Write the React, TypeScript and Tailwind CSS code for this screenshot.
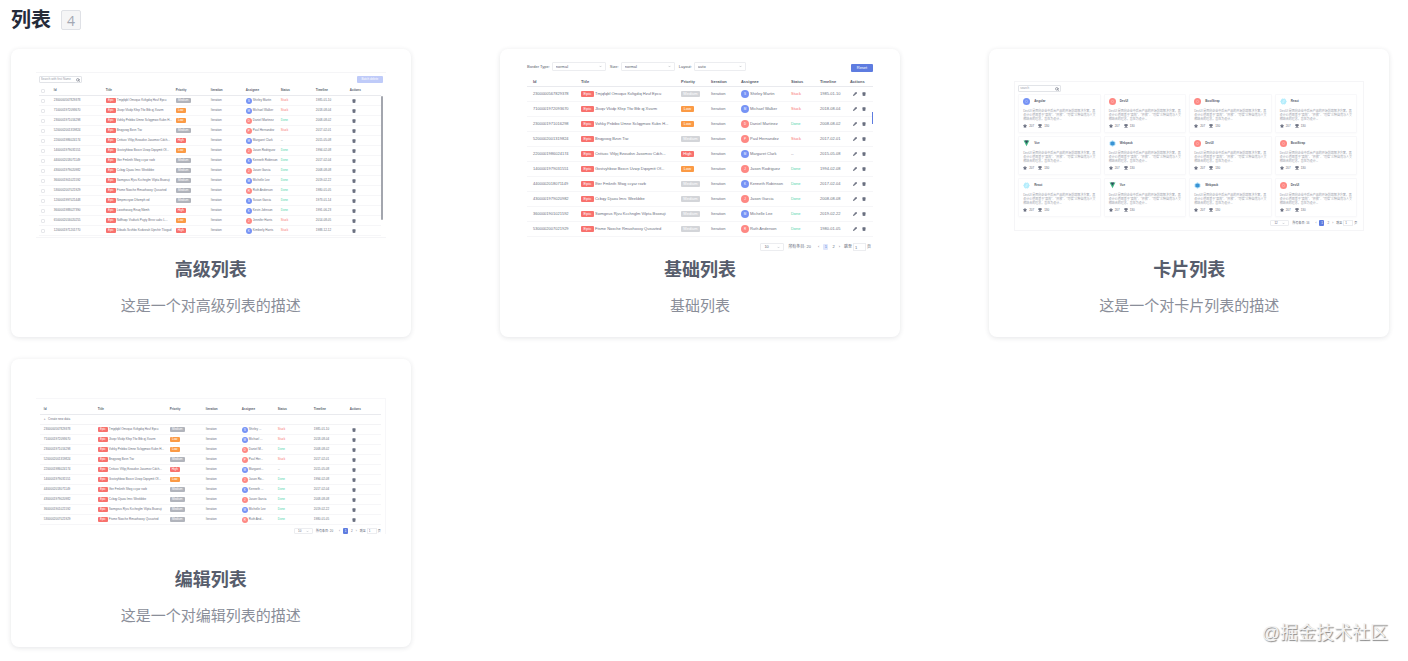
import React from 'react';
import { ChevronDown, Pencil, Search, Star, Trash2, Trophy } from 'lucide-react';
import clsx from 'clsx';

type Priority = 'Medium' | 'Low' | 'High';

type Row = {
  id: string;
  title: string;
  priority: Priority;
  assignee: string;
  blue: boolean;
  status: 'Stuck' | 'Done' | '--';
  timeline: string;
};

type Framework = {
  name: string;
  kind: 'blue' | 'red' | 'react' | 'vue' | 'webpack';
};

const rows: Row[] = [
  { id: '2300000567829378', title: 'Tmjqfqbl Omvqux Kvltgdiq Hzuf Epcu', priority: 'Medium', assignee: 'Shirley Martin', blue: true, status: 'Stuck', timeline: '1985-01-10' },
  { id: '7100001972093670', title: 'Jkvqv Vkidp Kfep Tfw Btb qj Xvarm', priority: 'Low', assignee: 'Michael Walker', blue: true, status: 'Stuck', timeline: '2018-08-04' },
  { id: '2300001971016298', title: 'Vohky Pnbibo Umne Sclqgmwx Kubn H...', priority: 'Low', assignee: 'Daniel Martinez', blue: false, status: 'Done', timeline: '2008-08-02' },
  { id: '5200002001319824', title: 'Bnqyvwg Bzvn Tiw', priority: 'Medium', assignee: 'Paul Hernandez', blue: false, status: 'Stuck', timeline: '2017-02-01' },
  { id: '2200001986024174', title: 'Cnttuxc Vltlpj Ezoudsn Jasomxv Cdch...', priority: 'High', assignee: 'Margaret Clark', blue: true, status: '--', timeline: '2015-05-08' },
  { id: '1400001979031551', title: 'Gxstvyhbxw Bxxcn Uvwp Dqoymtt Of...', priority: 'Low', assignee: 'Jason Rodriguez', blue: false, status: 'Done', timeline: '1994-02-08' },
  { id: '4400002018071149', title: 'Ifter Fmknth Sfwg ccyar rozb', priority: 'Medium', assignee: 'Kenneth Robinson', blue: true, status: 'Done', timeline: '2017-02-04' },
  { id: '4300001979020982', title: 'Ccbqy Djaou Imrc Weekbbe', priority: 'Medium', assignee: 'Jason Garcia', blue: false, status: 'Done', timeline: '2008-08-08' },
  { id: '3600001901021592', title: 'Swmgeus Rjvu Kcchnglm Vilpta Bsoeuji', priority: 'Medium', assignee: 'Michelle Lee', blue: true, status: 'Done', timeline: '2019-02-22' },
  { id: '5300002007021929', title: 'Ftsme Noxche Rmuohoxxy Qusuvted', priority: 'Medium', assignee: 'Ruth Anderson', blue: false, status: 'Done', timeline: '1980-01-05' },
  { id: '1200001997021448', title: 'Nmpmcvyoe Dfwmph ed', priority: 'Medium', assignee: 'Susan Garcia', blue: true, status: 'Done', timeline: '1973-01-14' },
  { id: '3600001988027390', title: 'Lwxehwuvg Rnuq Nbmh', priority: 'High', assignee: 'Kevin Johnson', blue: true, status: 'Done', timeline: '1991-06-23' },
  { id: '6500002016020255', title: 'Ndfhoqc Vsdturk Psgty Brvsr uahc L...', priority: 'Low', assignee: 'Jennifer Harris', blue: false, status: 'Stuck', timeline: '2014-08-05' },
  { id: '1200001971201770', title: 'Dibuds Scvhbx Kcdvxrah Uprchtr Tkxgud', priority: 'High', assignee: 'Kimberly Harris', blue: true, status: 'Stuck', timeline: '1988-12-12' },
];

const headers = ['Id', 'Title', 'Priority', 'Iteration', 'Assignee', 'Status', 'Timeline', 'Actions'];

const frameworks: Framework[] = [
  { name: 'Angular', kind: 'blue' },
  { name: 'DevUI', kind: 'red' },
  { name: 'BootStrap', kind: 'red' },
  { name: 'React', kind: 'react' },
  { name: 'Vue', kind: 'vue' },
  { name: 'Webpack', kind: 'webpack' },
  { name: 'DevUI', kind: 'red' },
  { name: 'BootStrap', kind: 'red' },
  { name: 'React', kind: 'react' },
  { name: 'Vue', kind: 'vue' },
  { name: 'Webpack', kind: 'webpack' },
  { name: 'DevUI', kind: 'red' },
];

const priorityColor = (priority: Priority, large: boolean) => {
  if (priority === 'Low') return 'bg-[#fb9a45]';
  if (priority === 'High') return 'bg-[#f8716d]';
  return large ? 'bg-[#d3d5d9]' : 'bg-[#b1b4bc]';
};

const statusColor = {
  Stuck: 'text-[#f8716d]',
  Done: 'text-[#50d4ab]',
  '--': 'text-[#6b7080]',
};

const shortName = (name: string) => (name.length > 12 ? `${name.slice(0, 8)}...` : name);

type TableProps = {
  data: Row[];
  cols: string[];
  large?: boolean;
  selectable?: boolean;
  creatable?: boolean;
};

const PreviewTable: React.FC<TableProps> = ({ data, cols, large = false, selectable = false, creatable = false }) => {
  const cell = clsx(
    'border-b border-[#f6f6f8] p-0 whitespace-nowrap',
    large ? 'h-[15px]' : 'h-[10px]'
  );
  const tag = clsx(
    'shrink-0 rounded-[1px] text-center text-white',
    large ? 'h-[6px] leading-[6px]' : 'h-[5px] leading-[5px]'
  );

  return (
    <table
      className={clsx(
        'w-full table-fixed border-separate border-spacing-0 text-left text-[#6b7080]',
        large ? 'text-[4px] leading-[6px]' : 'text-[3px] leading-[5px]'
      )}
    >
      <colgroup>
        {cols.map((width, i) => (
          <col key={i} className={width} />
        ))}
      </colgroup>
      <thead>
        <tr>
          {selectable && (
            <th className="border-b border-[#e9eaee] p-0">
              <input type="checkbox" aria-label="Select all" className="ml-[2px] block size-[4px] appearance-none rounded-[1px] border border-[#e6e7eb]" />
            </th>
          )}
          {headers.map((header, i) => (
            <th
              key={header}
              className={clsx(
                'h-[10px] border-b border-[#e9eaee] p-0 font-bold text-[#575d6c]',
                i === 0 && !selectable && (large ? 'pl-[6px]' : 'pl-[4px]')
              )}
            >
              {header}
            </th>
          ))}
        </tr>
      </thead>
      <tbody>
        {creatable && (
          <tr>
            <td colSpan={8} className="h-[10px] border-b border-[#f3f3f5] p-0 pl-[4px]">
              <button type="button" className="block">+ &nbsp; Create new data</button>
            </td>
          </tr>
        )}
        {data.map((row) => (
          <tr key={row.id}>
            {selectable && (
              <td className={cell}>
                <input type="checkbox" aria-label={row.id} className="ml-[2px] block size-[4px] appearance-none rounded-[1px] border border-[#e6e7eb]" />
              </td>
            )}
            <td className={clsx(cell, !selectable && (large ? 'pl-[6px]' : 'pl-[4px]'))}>{row.id}</td>
            <td className={cell}>
              <div className="flex items-center gap-px">
                <span className={clsx(tag, 'bg-[#f8716d]', large ? 'w-[13px]' : 'w-[10px]')}>Epic</span>
                <span>{row.title}</span>
              </div>
            </td>
            <td className={cell}>
              <div
                className={clsx(
                  tag,
                  priorityColor(row.priority, large),
                  row.priority === 'Medium' ? (large ? 'w-[19px]' : 'w-[15px]') : large ? 'w-[13px]' : 'w-[10px]'
                )}
              >
                {row.priority}
              </div>
            </td>
            <td className={cell}>Iteration</td>
            <td className={cell}>
              <div className="flex items-center gap-px">
                <span
                  className={clsx(
                    'shrink-0 rounded-full text-center text-[3px] text-white',
                    large ? 'size-[8px] leading-[8px]' : 'size-[6px] leading-[6px]',
                    row.blue ? 'bg-[#7693f5]' : 'bg-[#fe8883]'
                  )}
                >
                  {row.assignee[0]}
                </span>
                <span>{creatable ? shortName(row.assignee) : row.assignee}</span>
              </div>
            </td>
            <td className={clsx(cell, statusColor[row.status])}>{row.status}</td>
            <td className={cell}>{row.timeline}</td>
            <td className={cell}>
              <div className={clsx('flex items-center', large ? 'gap-[5px] pl-[3px]' : 'pl-[2px]')}>
                {large && (
                  <button type="button" aria-label="Edit">
                    <Pencil className="size-[4px]" fill="currentColor" strokeWidth={4} />
                  </button>
                )}
                <button type="button" aria-label="Delete">
                  <Trash2 className="size-[4px]" fill="currentColor" strokeWidth={3} />
                </button>
              </div>
            </td>
          </tr>
        ))}
      </tbody>
    </table>
  );
};

const SearchBox = ({ placeholder }: { placeholder: string }) => (
  <div className="flex h-[7px] w-[43px] items-center justify-between rounded-[1px] border border-[#e2e4e8] px-px">
    <input
      aria-label="Search"
      placeholder={placeholder}
      className="h-[5px] w-[34px] p-0 text-[3px] leading-[5px] placeholder:text-[#9a9eaa]"
    />
    <Search className="size-[4px] text-[#575d6c]" strokeWidth={3} />
  </div>
);

const MiniSelect = ({ label, value, className }: { label: string; value: string; className: string }) => (
  <div className={clsx('flex items-center justify-between rounded-[1px] border border-[#ecedf0] px-[3px]', className)}>
    <select aria-label={label} className="min-w-0 flex-1 appearance-none bg-transparent p-0">
      <option>{value}</option>
    </select>
    <ChevronDown className="size-[3px] shrink-0" />
  </div>
);

const Pagination = ({ total, size, solid = false }: { total: number; size: string; solid?: boolean }) => (
  <div
    className={clsx(
      'flex items-center justify-end text-[#6b7080]',
      solid ? 'gap-[3px] text-[3px] leading-[5px]' : 'gap-[4px] text-[4px] leading-[6px]'
    )}
  >
    <MiniSelect label="Page size" value={size} className={solid ? 'h-[6px] w-[19px]' : 'h-[8px] w-[24px]'} />
    <span>所有条目: {total}</span>
    <button type="button" className="pl-[3px]">‹</button>
    <button
      type="button"
      className={clsx('h-[6px] w-[5px] rounded-[1px]', solid ? 'bg-[#5e7ce0] text-white' : 'bg-[#dfe6fb] text-[#5e7ce0]')}
    >
      1
    </button>
    <button type="button">2</button>
    <button type="button">›</button>
    <label className="flex items-center gap-px">
      跳至
      <input defaultValue="1" className={clsx('border border-[#ecedf0] px-px py-0', solid ? 'h-[6px] w-[10px]' : 'h-[8px] w-[13px]')} />
      页
    </label>
  </div>
);

const AdvancedPreview = () => (
  <div className="pt-[15px]">
    <div className="h-[166px] overflow-hidden border-y border-[#f5f5f7] px-[3px] pt-[3px]">
      <div className="flex items-center justify-between">
        <SearchBox placeholder="Search with first Name" />
        <button type="button" className="h-[7px] w-[26px] rounded-[1px] bg-[#bfcbf9] text-[3px] leading-[7px] text-white">
          Batch delete
        </button>
      </div>
      <div className="mt-[3px] flex">
        <div className="min-w-0 flex-1">
          <PreviewTable
            data={rows}
            selectable
            cols={['w-[15px]', 'w-[52px]', 'w-[70px]', 'w-[35px]', 'w-[35px]', 'w-[35px]', 'w-[35px]', 'w-[34px]', 'w-auto']}
          />
        </div>
        <div className="mt-[10px] h-[124px] w-[2px] rounded-full bg-[#a3a6ae]" />
      </div>
    </div>
  </div>
);

const BasicPreview = () => (
  <div className="px-[2px] pt-[4px]">
    <div className="flex items-center gap-[2px] text-[4px] leading-[6px] text-[#575d6c]">
      <span>Border Type:</span>
      <MiniSelect label="Border Type" value="normal" className="mr-[2px] h-[9px] w-[54px]" />
      <span>Size:</span>
      <MiniSelect label="Size" value="normal" className="mr-[2px] h-[9px] w-[54px]" />
      <span>Layout:</span>
      <MiniSelect label="Layout" value="auto" className="h-[9px] w-[52px]" />
      <button type="button" className="mt-[3px] ml-auto h-[8px] w-[22px] rounded-[1px] bg-[#5e7ce0] leading-[8px] text-white">
        Reset
      </button>
    </div>
    <div className="relative mt-[5px]">
      <PreviewTable
        data={rows.slice(0, 10)}
        large
        cols={['w-[54px]', 'w-[100px]', 'w-[30px]', 'w-[30px]', 'w-[50px]', 'w-[29px]', 'w-[30px]', 'w-auto']}
      />
      <div className="absolute top-[35px] right-0 h-[12px] w-px bg-[#5e7ce0]" />
    </div>
    <div className="mt-[6px] pr-[2px]">
      <Pagination total={20} size="10" />
    </div>
  </div>
);

const FrameworkLogo = ({ kind }: { kind: Framework['kind'] }) => {
  if (kind === 'vue') {
    return (
      <svg viewBox="0 0 24 24" className="size-[7px]">
        <path d="M2 2h20L12 21z" fill="#41b883" />
        <path d="M6 2h12l-6 11z" fill="#35495e" />
      </svg>
    );
  }
  if (kind === 'webpack') {
    return (
      <svg viewBox="0 0 24 24" className="size-[7px]">
        <path d="M12 1l10 5.500v11L12 23 2 17.500v-11z" fill="#a9dcf7" />
        <path d="M12 5l7 3v8l-7 3-7-3V8z" fill="#3a93d4" />
      </svg>
    );
  }
  if (kind === 'react') {
    return (
      <svg viewBox="0 0 24 24" className="size-[7px]" fill="#c9f2fd" stroke="#a5eafc" strokeWidth="2">
        <ellipse cx="12" cy="12" rx="10" ry="5" />
        <ellipse cx="12" cy="12" rx="10" ry="5" transform="rotate(60 12 12)" />
        <ellipse cx="12" cy="12" rx="10" ry="5" transform="rotate(120 12 12)" />
      </svg>
    );
  }
  return (
    <svg viewBox="0 0 24 24" className="size-[7px]">
      <circle cx="12" cy="12" r="12" fill={kind === 'blue' ? '#7693f5' : '#fe8883'} />
      <circle cx="12" cy="12" r="4" fill="none" stroke="#fff" strokeOpacity="0.4" strokeWidth="2" />
    </svg>
  );
};

const CardPreview = () => (
  <div className="pt-[24px]">
    <div className="h-[150px] border border-[#f5f5f7] pt-[3px] pr-[6px] pl-[3px]">
      <SearchBox placeholder="search" />
      <div className="mt-[2px] grid grid-cols-4 gap-[3px]">
        {frameworks.map((item, i) => (
          <div key={i} className="h-[39px] rounded-[1px] border border-[#f8f8fa] px-[4px] pt-[3px] text-[3px] text-[#6b7080] shadow-xs shadow-black/2">
            <div className="flex items-center gap-[4px] leading-[7px] font-bold text-[#575d6c]">
              <FrameworkLogo kind={item.kind} />
              {item.name}
            </div>
            <p className="mt-[4px] leading-[4px] text-[#9a9eaa]">
              DevUI 是面向企业中后台产品的开源前端解决方案，其设计价值观基于"高效"、"开放"、"可信"三种自然与人文相结合的理念，旨在为设计...
            </p>
            <div className="mt-[3px] flex items-center gap-[2px] leading-[4px]">
              <Star className="size-[4px]" fill="currentColor" strokeWidth={3} />
              207
              <Trophy className="ml-[2px] size-[4px]" fill="currentColor" strokeWidth={3} />
              130
            </div>
          </div>
        ))}
      </div>
      <div className="mt-[3px]">
        <Pagination total={16} size="12" solid />
      </div>
    </div>
  </div>
);

const EditPreview = () => (
  <div className="pt-[31px]">
    <div className="h-[136px] border-t border-r border-[#f7f7f9] px-[4px] pt-[6px]">
      <PreviewTable
        data={rows.slice(0, 10)}
        creatable
        cols={['w-[58px]', 'w-[72px]', 'w-[36px]', 'w-[36px]', 'w-[36px]', 'w-[36px]', 'w-[36px]', 'w-auto']}
      />
      <div className="mt-[3px]">
        <Pagination total={20} size="10" solid />
      </div>
    </div>
  </div>
);

const cards = [
  { title: '高级列表', description: '这是一个对高级列表的描述', Preview: AdvancedPreview },
  { title: '基础列表', description: '基础列表', Preview: BasicPreview },
  { title: '卡片列表', description: '这是一个对卡片列表的描述', Preview: CardPreview },
  { title: '编辑列表', description: '这是一个对编辑列表的描述', Preview: EditPreview },
];

export default function App() {
  return (
    <main className="relative bg-white pt-2 pr-[19px] pb-[14px] pl-[11px] font-['Liberation_Sans','Noto_Sans_CJK_SC',sans-serif]">
      <header className="flex items-center gap-[10px]">
        <h2 className="text-[20px] leading-6 font-bold text-[#252b3a]">列表</h2>
        <span className="flex size-5 items-center justify-center rounded-[2px] border border-[#dfe1e6] bg-[#f5f5f6] font-['Open_Sans',sans-serif] text-[14px] text-[#a3a7b3]">
          {cards.length}
        </span>
      </header>

      <div className="mt-[17px] grid grid-cols-[29%_29%_29%] justify-between gap-y-[22px]">
        {cards.map(({ title, description, Preview }) => (
          <article key={title} className="rounded-lg bg-white pt-2 pb-[19px] text-center shadow-[0_1px_5px_rgba(37,43,58,0.12)]">
            <div className="mx-auto h-[201px] w-[350px] max-w-full text-left">
              <Preview />
            </div>
            <h3 className="text-[18px] leading-6 font-bold text-[#575d6c]">{title}</h3>
            <p className="mt-3 text-[15px] leading-6 text-[#8a8e99]">{description}</p>
          </article>
        ))}
      </div>

      <div className="absolute right-5 bottom-4 text-[18px] leading-6 text-[#f2f2f2] [text-shadow:1px_1px_1px_#888]">
        @掘金技术社区
      </div>
    </main>
  );
}
